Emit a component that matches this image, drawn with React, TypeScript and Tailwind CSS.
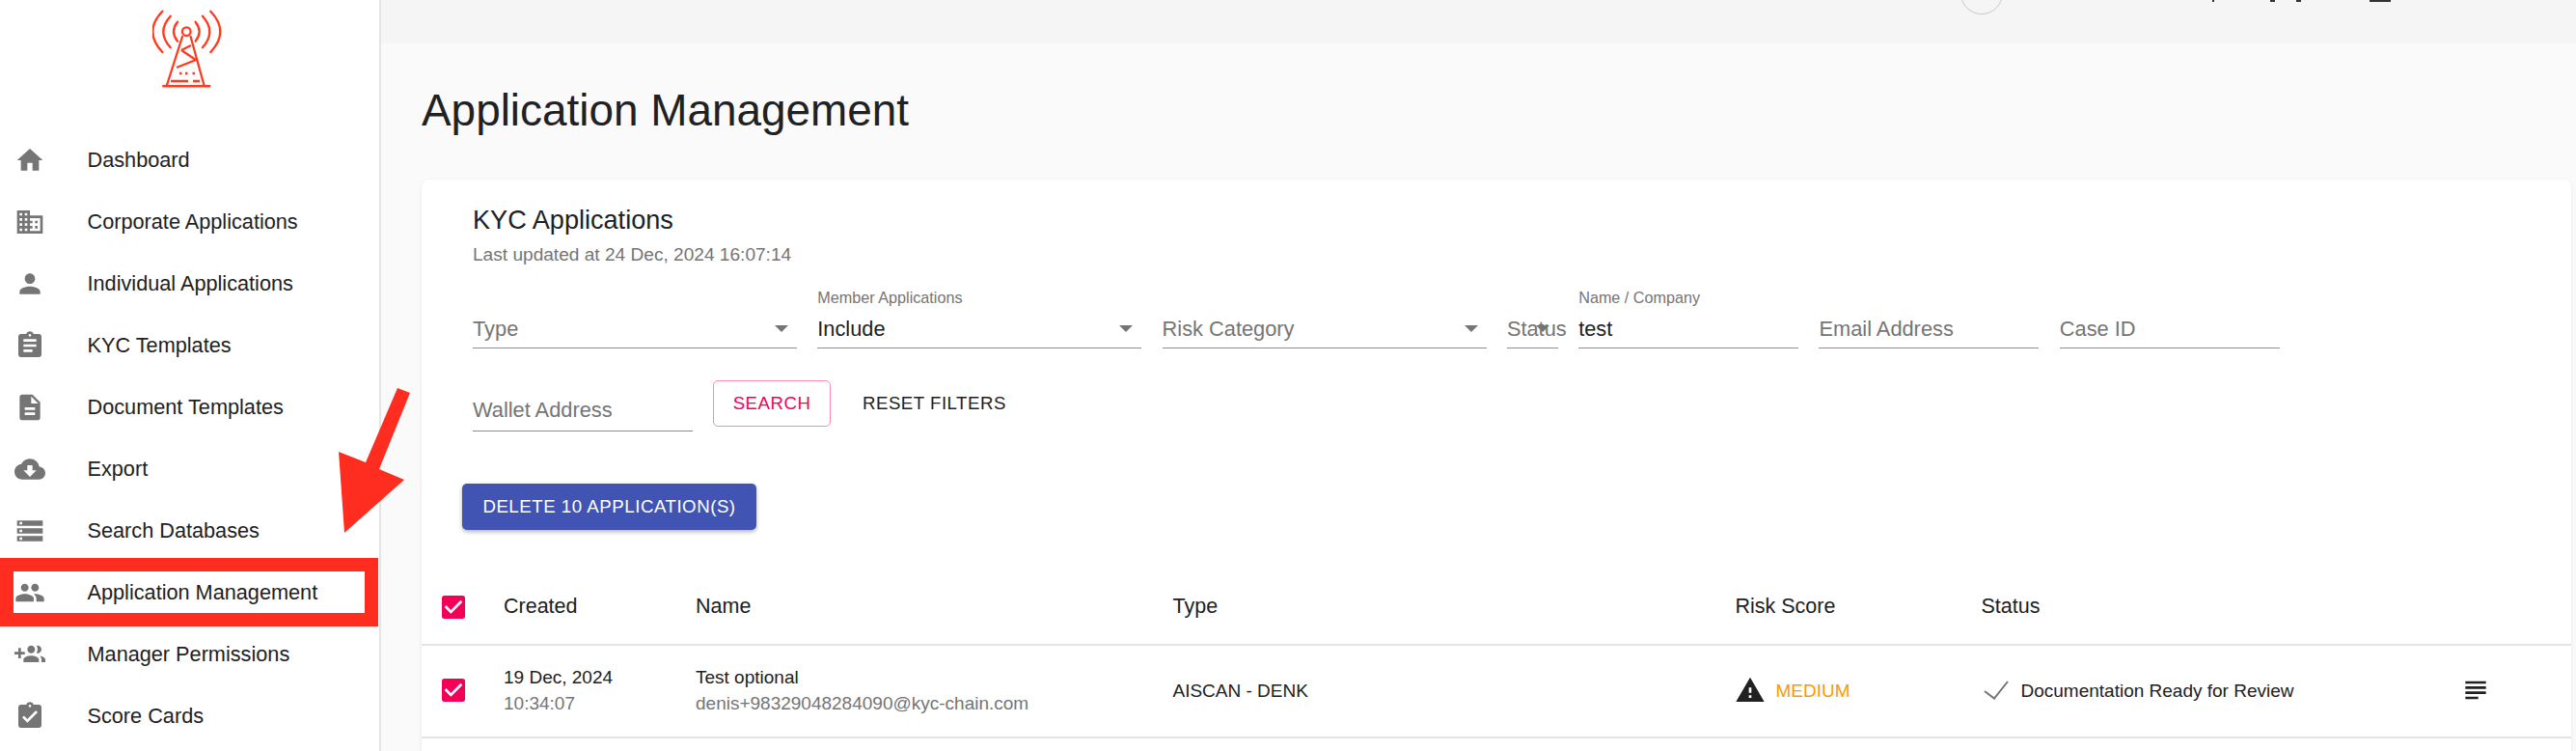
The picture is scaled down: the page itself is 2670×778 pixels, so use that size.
import type { ReactNode } from "react";
import {
  MdAssignment,
  MdAssignmentTurnedIn,
  MdCheckBox,
  MdCloudDownload,
  MdDescription,
  MdDomain,
  MdHome,
  MdPeople,
  MdPerson,
  MdStorage,
  MdSubject,
  MdWarning,
} from "react-icons/md";

function GroupAddIcon() {
  return (
    <svg width="32" height="32" viewBox="0 0 24 24" fill="currentColor">
      <path d="M8 10H5V7H3v3H0v2h3v3h2v-3h3v-2zm10 1c1.66 0 2.99-1.34 2.99-3S19.66 5 18 5c-.32 0-.63.05-.91.14.57.81.9 1.79.9 2.86s-.34 2.04-.9 2.86c.28.09.59.14.91.14zm-5 0c1.66 0 2.99-1.34 2.99-3S14.66 5 13 5s-3 1.34-3 3 1.34 3 3 3zm6.62 2.16c.83.73 1.38 1.66 1.38 2.84v2h3v-2c0-1.54-2.37-2.49-4.38-2.84zM13 13c-2 0-6 1-6 3v2h12v-2c0-2-4-3-6-3z" />
    </svg>
  );
}

const navItems = [
  { label: "Dashboard", icon: <MdHome size={32} /> },
  { label: "Corporate Applications", icon: <MdDomain size={32} /> },
  { label: "Individual Applications", icon: <MdPerson size={32} /> },
  { label: "KYC Templates", icon: <MdAssignment size={32} /> },
  { label: "Document Templates", icon: <MdDescription size={32} /> },
  { label: "Export", icon: <MdCloudDownload size={32} /> },
  { label: "Search Databases", icon: <MdStorage size={32} /> },
  { label: "Application Management", icon: <MdPeople size={32} /> },
  { label: "Manager Permissions", icon: <GroupAddIcon /> },
  { label: "Score Cards", icon: <MdAssignmentTurnedIn size={32} /> },
];

function Logo() {
  const arcs = [
    "M26 12.7Q18 22.7 26 32.7",
    "M18.7 6.7Q3.9 22.7 18.7 39.3",
    "M10.3 1.7Q-9.7 22.7 10.3 44",
    "M44.6 12.7Q52.6 22.7 44.6 32.7",
    "M51.9 6.7Q66.7 22.7 51.9 39.3",
    "M60.3 1.7Q80.3 22.7 60.3 44",
  ];
  return (
    <svg width="72" height="82" viewBox="0 0 72 82" fill="none" stroke="#ff3a1f" strokeWidth="2.3">
      {arcs.map((d) => (
        <path key={d} d={d} strokeLinecap="round" />
      ))}
      <circle cx="35.3" cy="22.7" r="4.3" />
      <path d="M31.3 27L14.7 79M39.3 27L53.7 79" />
      <path d="M10.3 79.3H60.3" strokeWidth="2.6" />
      <path d="M30 42L45 52L25 60M30 42L40 37" />
      <path d="M28 66h2.5M34 66h2.5M41.5 66h2.5" />
      <path d="M19 74H37M42 74H49" />
    </svg>
  );
}

function Sidebar() {
  return (
    <aside className="w-[395px] shrink-0 border-r-2 border-[#e4e4e4] bg-white">
      <div className="flex h-[134px] justify-center pt-[10px] pr-[5px]">
        <div>
          <Logo />
        </div>
      </div>
      <nav>
        {navItems.map((item) => (
          <div key={item.label} className="flex h-[64px] items-center pl-[15px]">
            <span className="w-[75.5px] text-[#757575]">{item.icon}</span>
            <span className="text-[21.7px] text-[#212121]">{item.label}</span>
          </div>
        ))}
      </nav>
    </aside>
  );
}

function TopBar() {
  return (
    <div className="relative h-[45px] bg-[#f5f5f5]">
      <div className="absolute top-[-29px] left-[1637px] h-[44px] w-[44px] rounded-full border border-[#c9c9c9]" />
      <div className="absolute top-0 left-[1898px] h-[2px] w-[2px] bg-[#333]" />
      <div className="absolute top-0 left-[1958px] h-[2px] w-[5px] bg-[#333]" />
      <div className="absolute top-0 left-[1985px] h-[2px] w-[5px] bg-[#333]" />
      <div className="absolute top-0 left-[2061px] h-[2px] w-[22px] bg-[#333]" />
    </div>
  );
}

function Field({
  width,
  label,
  value,
  placeholder,
  select,
}: {
  width: string;
  label?: string;
  value?: string;
  placeholder?: string;
  select?: boolean;
}) {
  return (
    <div className={`relative flex h-[67px] shrink-0 flex-col justify-end border-b-[1.5px] border-[#8e8e8e] pb-[6px] ${width}`}>
      {label && <span className="mb-[10px] text-[16.2px] leading-[20px] whitespace-nowrap text-[#757575]">{label}</span>}
      {value ? (
        <span className="text-[21.8px] leading-[26px] text-[#212121]">{value}</span>
      ) : (
        <span className="text-[21.8px] leading-[26px] whitespace-nowrap text-[#757575]">{placeholder}</span>
      )}
      {select && (
        <svg className="absolute right-[9px] bottom-[16px]" width="14" height="7" viewBox="0 0 14 7">
          <path d="M0 0H14L7 7Z" fill="#757575" />
        </svg>
      )}
    </div>
  );
}

function Row({ children, className }: { children: ReactNode; className: string }) {
  return (
    <div className={`grid grid-cols-[85px_199px_494.5px_583px_255px_500px_1fr] items-center border-b-2 border-[#e4e4e4] ${className}`}>
      {children}
    </div>
  );
}

function ApplicationsCard() {
  return (
    <section className="h-[640px] rounded-lg bg-white shadow-[0_1px_4px_rgba(0,0,0,0.08)]">
      <div className="px-[53px] pt-[26px]">
        <h2 className="text-[27.1px] leading-[32px] text-[#212121]">KYC Applications</h2>
        <p className="mt-[8px] text-[19.1px] leading-[24px] text-[#757575]">Last updated at 24 Dec, 2024 16:07:14</p>
        <div className="mt-[18px] flex gap-[21.3px]">
          <Field width="w-[336px]" placeholder="Type" select />
          <Field width="w-[336px]" label="Member Applications" value="Include" select />
          <Field width="w-[336px]" placeholder="Risk Category" select />
          <Field width="w-[53px]" placeholder="Status" select />
          <Field width="w-[228px]" label="Name / Company" value="test" />
          <Field width="w-[228px]" placeholder="Email Address" />
          <Field width="w-[228px]" placeholder="Case ID" />
        </div>
        <div className="mt-[32px] flex items-start">
          <div className="w-[228px] pt-[19px]">
            <div className="border-b-[1.5px] border-[#8e8e8e] pb-[8px] text-[21.8px] leading-[26px] text-[#757575]">Wallet Address</div>
          </div>
          <button className="mt-[1px] ml-[21px] h-[48px] w-[122px] rounded-[5px] border border-[#f98ab0] text-[18.67px] tracking-[0.5px] text-[#f50057]">
            SEARCH
          </button>
          <button className="mt-[1px] ml-[33px] h-[48px] text-[18.67px] tracking-[0.5px] text-[#212121]">RESET FILTERS</button>
        </div>
      </div>
      <div className="mt-[54px] pl-[42px]">
        <button className="h-[48px] w-[305px] rounded-[5px] bg-[#4154b3] text-[18.67px] tracking-[0.53px] text-white shadow-[0_2px_4px_rgba(0,0,0,0.3)]">
          DELETE 10 APPLICATION(S)
        </button>
      </div>
      <div className="mt-[39px]">
        <Row className="h-[81px] pt-[2px] text-[21.5px] text-[#212121]">
          <MdCheckBox size={32} className="ml-[17px] text-[#f50057]" />
          <span>Created</span>
          <span>Name</span>
          <span>Type</span>
          <span>Risk Score</span>
          <span>Status</span>
          <span />
        </Row>
        <Row className="h-[96px] pb-[2px] text-[19px] leading-[27px] text-[#212121]">
          <MdCheckBox size={32} className="ml-[17px] text-[#f50057]" />
          <div>
            <div>19 Dec, 2024</div>
            <div className="text-[#757575]">10:34:07</div>
          </div>
          <div>
            <div>Test optional</div>
            <div className="text-[#757575]">denis+98329048284090@kyc-chain.com</div>
          </div>
          <span>AISCAN - DENK</span>
          <div className="flex items-center">
            <MdWarning size={32} className="-ml-[1px]" />
            <span className="ml-[11px] text-[#ff9800]">MEDIUM</span>
          </div>
          <div className="flex items-center">
            <svg className="ml-[2px]" width="26" height="20" viewBox="0 0 26 20" fill="none" stroke="#757575" strokeWidth="2">
              <path d="M1 11L11 18.5L25 1" />
            </svg>
            <span className="ml-[13px] whitespace-nowrap">Documentation Ready for Review</span>
          </div>
          <MdSubject size={32} className="-ml-[4px]" />
        </Row>
      </div>
    </section>
  );
}

export default function App() {
  return (
    <div className="relative flex h-[778px] w-[2670px] overflow-hidden bg-[#fafafa] [font-family:'Liberation_Sans',sans-serif]">
      <Sidebar />
      <main className="min-w-0 flex-1">
        <TopBar />
        <div className="pr-[5px] pl-[42px]">
          <h1 className="flex h-[141px] items-center pb-[2px] text-[45.9px] text-[#212121]">Application Management</h1>
          <ApplicationsCard />
        </div>
      </main>

      {/* annotation drawn on the screenshot */}
      <div className="absolute top-[578px] left-0 h-[71px] w-[392px] border-[14px] border-[#ff2d20]" />
      <svg className="absolute top-0 left-0" width="440" height="560">
        <path d="M412 402L425 407L393 486L419 497L357 552L351 468L379 479Z" fill="#ff2d20" />
      </svg>
    </div>
  );
}
